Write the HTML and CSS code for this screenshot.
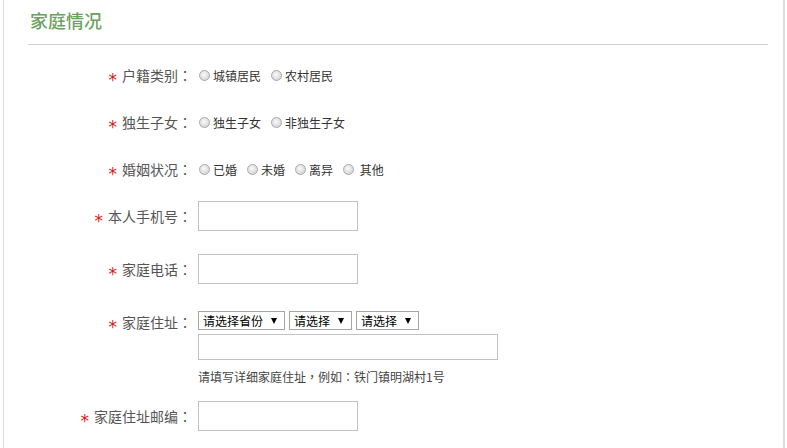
FILE: index.html
```html
<!DOCTYPE html>
<html lang="zh-CN">
<head>
    <meta charset="UTF-8">
    <meta name="viewport" content="width=device-width, initial-scale=1.0">
    <title>家庭情况</title>
    <link rel="stylesheet" href="styles.css">
</head>
<body>
  <div class="container">
    <div class="heading">
        <h2>家庭情况</h2>
    </div>
    <div class="form">
        <div class="row radio-row">
            <label class="name"><i>*</i>户籍类别<b>：</b></label>
            <div class="field">
                <label class="opt"><input type="radio" name="huji">城镇居民</label>
                <label class="opt"><input type="radio" name="huji">农村居民</label>
            </div>
        </div>
        <div class="row radio-row">
            <label class="name"><i>*</i>独生子女<b>：</b></label>
            <div class="field">
                <label class="opt"><input type="radio" name="dusheng">独生子女</label>
                <label class="opt"><input type="radio" name="dusheng">非独生子女</label>
            </div>
        </div>
        <div class="row radio-row">
            <label class="name"><i>*</i>婚姻状况<b>：</b></label>
            <div class="field">
                <label class="opt"><input type="radio" name="hunyin">已婚</label>
                <label class="opt"><input type="radio" name="hunyin">未婚</label>
                <label class="opt"><input type="radio" name="hunyin">离异</label>
                <label class="opt"><input type="radio" name="hunyin">&nbsp;其他</label>
            </div>
        </div>
        <div class="row">
            <label class="name"><i>*</i>本人手机号<b>：</b></label>
            <div class="field"><input type="text" class="txt"></div>
        </div>
        <div class="row">
            <label class="name"><i>*</i>家庭电话<b>：</b></label>
            <div class="field"><input type="text" class="txt"></div>
        </div>
        <div class="row address">
            <label class="name"><i>*</i>家庭住址<b>：</b></label>
            <div class="field">
                <div class="selects">
                    <span class="sel sel-wide"><select><option>请选择省份</option></select></span>
                    <span class="sel"><select><option>请选择</option></select></span>
                    <span class="sel"><select><option>请选择</option></select></span>
                </div>
                <input type="text" class="txt long">
                <p class="tip">请填写详细家庭住址<b>，</b>例如<b>：</b>铁门镇明湖村1号</p>
            </div>
        </div>
        <div class="row">
            <label class="name"><i>*</i>家庭住址邮编<b>：</b></label>
            <div class="field"><input type="text" class="txt"></div>
        </div>
    </div>
  </div>
</body>
</html>
```

FILE: styles.css
```css
*{
    margin: 0;
    padding: 0;
    box-sizing: border-box;
}
body{
    background: #fff;
    font-family: "Noto Sans CJK SC", "Liberation Sans", sans-serif;
    overflow: hidden;
}
.container{
    margin-left: 3px;
    width: 782px;
    height: 448px;
    border-left: 1px solid #dcdcdc;
    border-right: 2px solid #dedede;
}
.heading{
    padding: 8px 0 0 26px;
}
.heading h2{
    font-size: 18px;
    line-height: 24px;
    font-weight: 500;
    color: #6aa260;
}
.heading::after{
    content: "";
    display: block;
    margin: 12px 0 0 -2px;
    width: 740px;
    height: 1px;
    background: #cfcfcf;
}
.form{
    padding-top: 15px;
}
.row{
    display: flex;
    align-items: flex-start;
    margin-bottom: 23px;
}
.radio-row{
    margin-bottom: 17px;
}
.row .name{
    width: 188px;
    height: 30px;
    margin-right: 6px;
    text-align: right;
    font-size: 14px;
    line-height: 30px;
    color: #555;
    white-space: nowrap;
}
.row .name i{
    display: inline-block;
    line-height: 1;
    font-style: normal;
    font-family: "DejaVu Sans", sans-serif;
    font-size: 17px;
    transform: translateY(5px);
    color: #d51b1b;
    margin-right: 5px;
}
.row .name b,
.tip b{
    display: inline-block;
    line-height: 1;
    font-weight: normal;
    font-family: "Noto Sans CJK TC", sans-serif;
}
.field{
    display: flex;
    align-items: center;
    min-height: 30px;
    font-size: 12px;
    color: #333;
}
.opt{
    display: flex;
    align-items: center;
    margin-right: 9px;
}
.opt input{
    appearance: none;
    -webkit-appearance: none;
    width: 11px;
    height: 11px;
    margin: 0 3px 0 1px;
    border-radius: 50%;
    border: 1px solid #a9a9a9;
    background: radial-gradient(circle at 45% 40%, #fafafa 0, #dedede 60%, #c8c8c8 100%);
}
.txt{
    width: 160px;
    height: 30px;
    border: 1px solid #c2c2c2;
    background: #fff;
    outline: none;
}
.address .field{
    display: block;
    padding-top: 4px;
}
.selects{
    display: flex;
    gap: 4px;
}
.sel{
    position: relative;
    display: block;
}
.sel select{
    appearance: none;
    -webkit-appearance: none;
    width: 63px;
    height: 19px;
    padding: 0 0 0 4px;
    border: 1px solid #a5a5a5;
    border-radius: 0;
    background: #fff;
    font-family: "Noto Sans CJK SC", sans-serif;
    font-size: 12px;
    line-height: 17px;
    color: #000;
}
.sel-wide select{
    width: 87px;
}
.sel::after{
    content: "";
    position: absolute;
    right: 8px;
    top: 7px;
    border-left: 3px solid transparent;
    border-right: 3px solid transparent;
    border-top: 6px solid #000;
}
.txt.long{
    display: block;
    width: 300px;
    height: 26px;
    margin-top: 4px;
}
.tip{
    margin-top: 8px;
    font-size: 12px;
    line-height: 18px;
    color: #444;
}
.address{
    margin-bottom: 15px;
}
```
